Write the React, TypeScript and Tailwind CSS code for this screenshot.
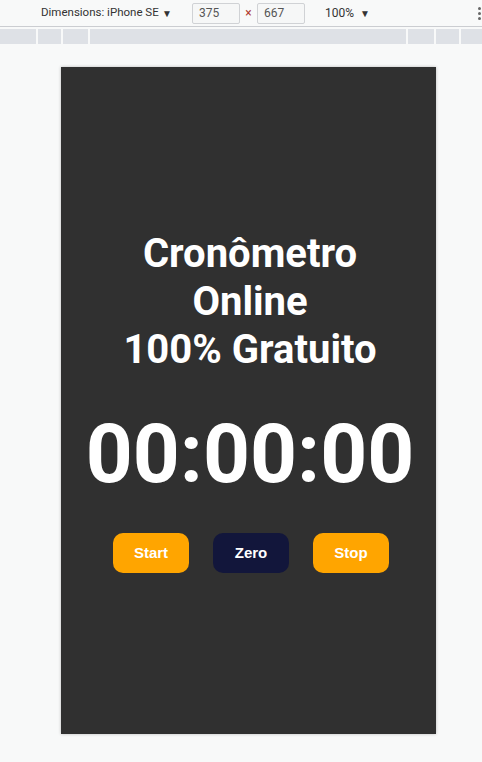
import { useState, useEffect, useRef } from 'react';

function pad(n: number) {
  return n.toString().padStart(2, '0');
}

export default function App() {
  const [seconds, setSeconds] = useState(0);
  const [running, setRunning] = useState(false);
  const timer = useRef<number | null>(null);

  useEffect(() => {
    if (!running) return;
    timer.current = window.setInterval(() => setSeconds((s) => s + 1), 1000);
    return () => {
      if (timer.current) window.clearInterval(timer.current);
    };
  }, [running]);

  const h = Math.floor(seconds / 3600);
  const m = Math.floor((seconds % 3600) / 60);
  const s = seconds % 60;

  return (
    <div className="w-[482px] h-[762px] bg-[#f8f9f9] flex flex-col overflow-hidden" style={{ fontFamily: 'Roboto, sans-serif' }}>
      {/* device toolbar */}
      <div className="h-[27px] flex items-center border-b border-[#cbcdd1] bg-[#f8f9f9] text-[12px] text-[#333] whitespace-nowrap">
        <div className="ml-[41px] w-[131px] flex items-center justify-between">
          <span className="text-[11.5px]">Dimensions: iPhone SE</span>
          <span className="text-[10px]">▼</span>
        </div>
        <div className="ml-[20px] w-[48px] h-[21px] border border-[#d0d2d5] rounded-[2px] bg-[#f6f7f7] pl-[6px] leading-[19px] text-[#555]">375</div>
        <span className="w-[17px] text-center text-[12px] text-[#b03a2e]">×</span>
        <div className="w-[48px] h-[21px] border border-[#d0d2d5] rounded-[2px] bg-[#f6f7f7] pl-[6px] leading-[19px] text-[#555]">667</div>
        <div className="ml-[20px] flex items-center gap-[6px]">
          <span>100%</span>
          <span className="text-[10px]">▼</span>
        </div>
        <div className="ml-auto mr-[1px] flex flex-col gap-[2px]">
          <span className="w-[3px] h-[3px] rounded-full bg-[#666]" />
          <span className="w-[3px] h-[3px] rounded-full bg-[#666]" />
          <span className="w-[3px] h-[3px] rounded-full bg-[#666]" />
        </div>
      </div>

      {/* media query bar */}
      <div className="mt-[2px] h-[15px] flex gap-[2px]">
        <div className="w-[36px] bg-[#dee1e6]" />
        <div className="w-[23px] bg-[#dee1e6]" />
        <div className="w-[25px] bg-[#dee1e6]" />
        <div className="flex-1 bg-[#dee1e6]" />
        <div className="w-[26px] bg-[#dee1e6]" />
        <div className="w-[23px] bg-[#dee1e6]" />
        <div className="w-[21px] bg-[#dee1e6]" />
      </div>

      {/* phone viewport */}
      <div className="mt-[23px] ml-[61px] w-[375px] h-[667px] bg-[#303030] shadow-[0_0_3px_rgba(0,0,0,0.25)] flex flex-col items-center justify-center pl-[3px] pt-[2px]">
        <h1 className="text-white text-center font-bold text-[40px] leading-[48px]">
          Cronômetro
          <br />
          Online
          <br />
          100% Gratuito
        </h1>
        <div className="mt-[32px] text-white font-bold text-[82px] leading-[96px]">
          {pad(h)}:{pad(m)}:{pad(s)}
        </div>
        <div className="mt-[31px] ml-[2px] flex gap-[24px]" style={{ fontFamily: '"Liberation Sans", Arial, sans-serif' }}>
          <button
            onClick={() => setRunning(true)}
            className="w-[76px] h-[40px] rounded-[10px] bg-[#ffa500] text-white font-bold text-[15px] pt-[1px]"
          >
            Start
          </button>
          <button
            onClick={() => {
              setRunning(false);
              setSeconds(0);
            }}
            className="w-[76px] h-[40px] rounded-[10px] bg-[#12163b] text-white font-bold text-[15px] pt-[1px]"
          >
            Zero
          </button>
          <button
            onClick={() => setRunning(false)}
            className="w-[76px] h-[40px] rounded-[10px] bg-[#ffa500] text-white font-bold text-[15px] pt-[1px]"
          >
            Stop
          </button>
        </div>
      </div>
    </div>
  );
}
